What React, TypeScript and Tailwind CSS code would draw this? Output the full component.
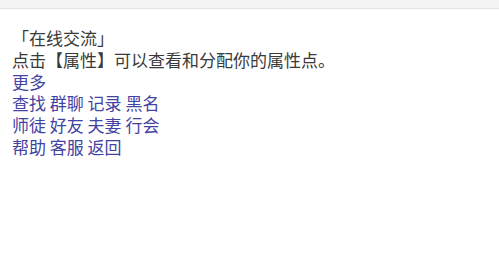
export default function App() {
  const rows = [
    ["更多"],
    ["查找", "群聊", "记录", "黑名"],
    ["师徒", "好友", "夫妻", "行会"],
    ["帮助", "客服", "返回"],
  ];

  return (
    <div
      className="min-h-screen bg-white"
      style={{ fontFamily: '"Noto Sans CJK SC", "Noto Sans", sans-serif' }}
    >
      <div className="h-[9px] bg-[#f4f4f4] border-b border-[#e2e2e2]" />
      <div className="px-3 pt-[18px] text-[17px] leading-[21.8px] text-[#3a3a3a]">
        <div>「在线交流」</div>
        <div>点击【属性】可以查看和分配你的属性点。</div>
        {rows.map((row, i) => (
          <div key={i} className="text-[#4343a3]">
            {row.join(" ")}
          </div>
        ))}
      </div>
    </div>
  );
}
